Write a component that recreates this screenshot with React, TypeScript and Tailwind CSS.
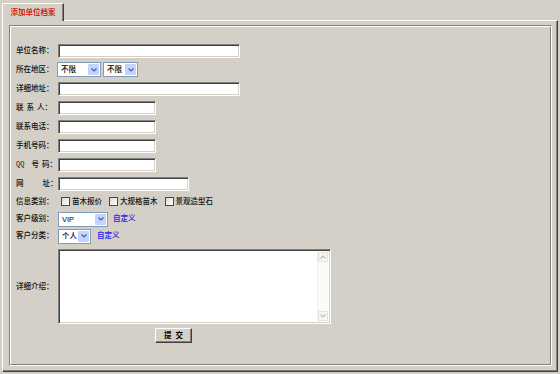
import React from "react";

const field =
  "h-[14px] bg-white border border-t-[#808080] border-l-[#808080] border-r-white border-b-white shadow-[inset_1px_1px_0_#404040,inset_-1px_-1px_0_#d4d0c8]";

const Chevron = ({ color = "#4d6185" }: { color?: string }) => (
  <svg width="6" height="4" viewBox="0 0 6 4">
    <path d="M0.5 0.5 L3 3 L5.5 0.5" fill="none" stroke={color} strokeWidth="1.2" />
  </svg>
);

const Select = ({ value, className }: { value: string; className: string }) => (
  <div className={`flex h-[15px] items-stretch border border-[#7f9db9] bg-white ${className}`}>
    <span className="flex-1 pl-[3px] text-[7.5px] leading-[13px] text-black">{value}</span>
    <span className="m-[1px] flex w-[11px] items-center justify-center rounded-[1px] bg-[#c3d3fd]">
      <Chevron />
    </span>
  </div>
);

const Checkbox = ({ text }: { text: string }) => (
  <label className="flex items-center">
    <span className="h-[9px] w-[9px] border border-[#1c5180] bg-gradient-to-br from-[#dcdcd7] to-white" />
    <span className="ml-[2px]">{text}</span>
  </label>
);

const Row = ({
  label,
  height,
  children,
}: {
  label: React.ReactNode;
  height: string;
  children: React.ReactNode;
}) => (
  <div className={`flex items-center ${height}`}>
    <div className="flex w-[42px] shrink-0">{label}</div>
    <div className="flex items-center">{children}</div>
  </div>
);

const Link = ({ className }: { className: string }) => (
  <a className={`text-[#1a1aee] ${className}`}>自定义</a>
);

const App: React.FC = () => {
  return (
    <div className="h-[374px] w-[560px] overflow-hidden bg-[#d4d0c8] pl-[2px] pt-[3px] font-['Liberation_Sans','Noto_Sans_CJK_SC',sans-serif] text-[7.5px] font-medium leading-none text-[#111]">
      {/* tab */}
      <div className="relative z-10 -mb-[1px] flex h-[18px] w-[62px] items-center justify-center border-l border-t border-r border-l-white border-t-white border-r-[#404040] bg-[#d4d0c8] shadow-[inset_-1px_0_0_#808080] text-[#d40000]">
        添加单位档案
      </div>

      {/* panel */}
      <div className="h-[352px] w-[556px] border border-t-white border-l-white border-r-[#404040] border-b-[#404040] shadow-[inset_-1px_-1px_0_#808080] pl-[6px] pt-[4px]">
        <div className="h-[341px] w-[543px] border border-t-[#808080] border-l-[#808080] border-r-white border-b-white">
          <div className="h-full w-full border border-t-white border-l-white border-r-[#808080] border-b-[#808080] pl-[5px] pt-[14px]">
            <Row height="h-[19px]" label={<span>单位名称：</span>}>
              <div className={`${field} w-[182px]`} />
            </Row>
            <Row height="h-[19px]" label={<span>所在地区：</span>}>
              <Select value="不限" className="w-[44px] -ml-[1px]" />
              <Select value="不限" className="ml-[2px] w-[35px]" />
            </Row>
            <Row height="h-[19px]" label={<span>详细地址：</span>}>
              <div className={`${field} w-[182px]`} />
            </Row>
            <Row
              height="h-[19px]"
              label={
                <>
                  <span>联</span>
                  <span className="ml-[3px]">系</span>
                  <span className="ml-[3px]">人</span>
                  <span>：</span>
                </>
              }
            >
              <div className={`${field} w-[98px]`} />
            </Row>
            <Row height="h-[19px]" label={<span>联系电话：</span>}>
              <div className={`${field} w-[98px]`} />
            </Row>
            <Row height="h-[19px]" label={<span>手机号码：</span>}>
              <div className={`${field} w-[98px]`} />
            </Row>
            <Row
              height="h-[19px]"
              label={
                <>
                  <span className="font-['Liberation_Mono',monospace] text-[7px]">QQ</span>
                  <span className="ml-[7px]">号</span>
                  <span className="ml-[3px]">码</span>
                  <span>：</span>
                </>
              }
            >
              <div className={`${field} w-[98px]`} />
            </Row>
            <Row
              height="h-[19px]"
              label={
                <>
                  <span>网</span>
                  <span className="ml-[19px]">址</span>
                  <span>：</span>
                </>
              }
            >
              <div className={`${field} w-[131px]`} />
            </Row>
            <Row height="h-[17px]" label={<span>信息类别：</span>}>
              <div className="ml-[3px] flex items-center gap-[7px]">
                <Checkbox text="苗木报价" />
                <Checkbox text="大规格苗木" />
                <Checkbox text="景观造型石" />
              </div>
            </Row>
            <Row height="h-[18px]" label={<span>客户级别：</span>}>
              <Select value="VIP" className="w-[50px]" />
              <Link className="ml-[5px]" />
            </Row>
            <Row height="h-[16px]" label={<span>客户分类：</span>}>
              <Select value="个人" className="w-[33px]" />
              <Link className="ml-[6px]" />
            </Row>
            <div className="flex items-center pt-[5px]">
              <div className="w-[42px] shrink-0">详细介绍：</div>
              <div className={`${field} flex h-[75px] w-[273px] justify-end p-[2px]`}>
                <div className="flex w-[11px] flex-col justify-between border-l border-[#f0efe8] bg-[#fbfbf6]">
                  <span className="flex h-[10px] items-center justify-center border border-[#e6e4dc] bg-[#f6f5ef]">
                    <span className="rotate-180">
                      <Chevron color="#c0beb6" />
                    </span>
                  </span>
                  <span className="flex h-[10px] items-center justify-center border border-[#e6e4dc] bg-[#f6f5ef]">
                    <Chevron color="#c0beb6" />
                  </span>
                </div>
              </div>
            </div>
            <div className="mt-[4px] pl-[139px]">
              <button className="flex h-[15px] w-[37px] items-center justify-center border border-t-white border-l-white border-r-[#404040] border-b-[#404040] bg-[#d4d0c8] text-[7.5px] font-bold text-black shadow-[inset_-1px_-1px_0_#808080]">
                <span>提</span>
                <span className="ml-[4px]">交</span>
              </button>
            </div>
          </div>
        </div>
      </div>
    </div>
  );
};

export default App;
